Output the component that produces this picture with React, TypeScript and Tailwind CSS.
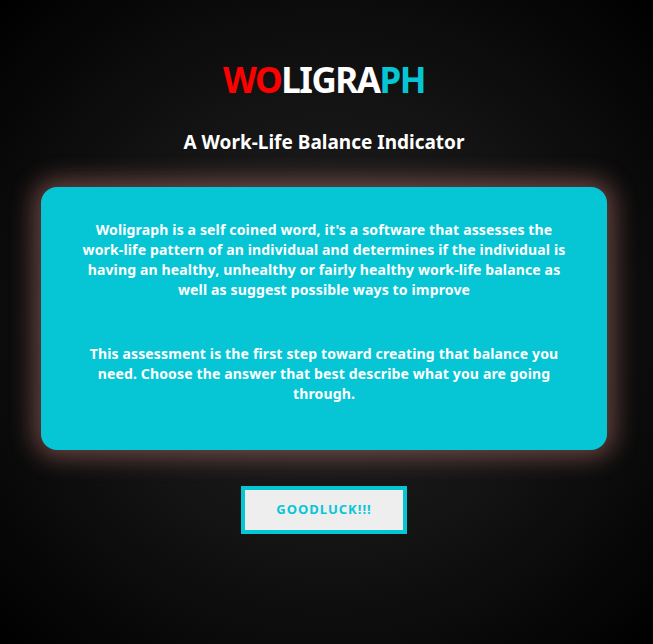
import React from "react";

const font = { fontFamily: '"Comic Sans MS", "Noto Sans", "DejaVu Sans", sans-serif' };

export default function App() {
  return (
    <div
      className="min-h-screen w-full flex flex-col items-center pr-[5px] bg-[radial-gradient(ellipse_at_center,#232323_0%,#151515_45%,#000000_100%)] text-white"
      style={font}
    >
      <h1 className="mt-[56px] text-[35px] leading-[48px] font-bold tracking-[-1.5px]">
        <span className="text-[#ff0000]">WO</span>
        <span className="text-white">LIGRA</span>
        <span className="text-[#06c6d6]">PH</span>
      </h1>

      <h2 className="mt-[24px] text-[19px] leading-[28px] font-bold">A Work-Life Balance Indicator</h2>

      <div className="mt-[31px] w-[566px] rounded-[16px] bg-[#06c6d6] px-[38px] pt-[33px] pb-[46px] shadow-[0_0_24px_7px_rgba(240,150,140,0.4)]">
        <p className="text-center text-[14px] leading-[20px] font-bold tracking-[0.15px]">
          Woligraph is a self coined word, it's a software that assesses the work-life pattern of an
          individual and determines if the individual is having an healthy, unhealthy or fairly healthy
          work-life balance as well as suggest possible ways to improve
        </p>
        <p className="mt-[44px] text-center text-[14px] leading-[20px] font-bold tracking-[0.15px]">
          This assessment is the first step toward creating that balance you need. Choose the answer that
          best describe what you are going through.
        </p>
      </div>

      <button className="mt-[36px] w-[166px] h-[48px] border-[4px] border-[#06c6d6] bg-[#eeeeee] text-[#06c6d6] text-[13px] font-bold tracking-[1px]">
        GOODLUCK!!!
      </button>
    </div>
  );
}
